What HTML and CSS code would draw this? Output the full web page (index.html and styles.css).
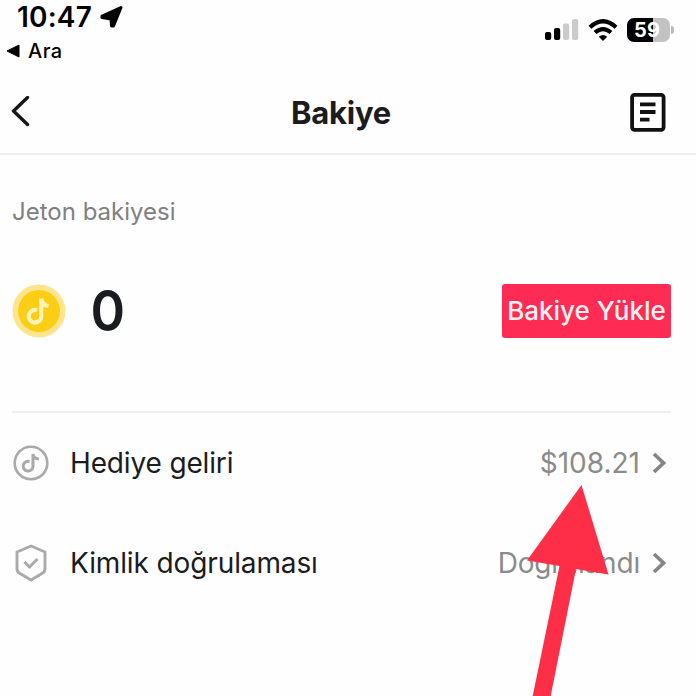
FILE: index.html
```html
<!DOCTYPE html>
<html lang="tr">
<head>
<meta charset="utf-8">
<title>Bakiye</title>
<link rel="stylesheet" href="styles.css">
</head>
<body>
<main class="screen">
  <div class="status">
    <div class="status-left">
      <div class="clock"><span class="time">10:47</span>
        <svg width="24" height="24" viewBox="0 0 24 24"><path d="M21 2.500 13.500 21 11.500 21 11 14 2 12.500 2 11Z" stroke="#000" stroke-width="3" stroke-linejoin="round"/></svg>
      </div>
      <div class="return">
        <svg width="14" height="14" viewBox="0 0 14 14"><path d="M1 7 13 1V13Z" stroke="#000" stroke-linejoin="round"/></svg>
        <span class="return-label">Ara</span>
      </div>
    </div>
    <div class="status-right">
      <svg width="34" height="22" viewBox="0 0 34 22"><rect x="0" y="13" width="6.2" height="8" rx="2"/><rect x="9" y="9" width="6.2" height="12" rx="2"/><g fill="#cbcbcb"><rect x="18" y="4.500" width="6.200" height="16.500" rx="2"/><rect x="27" y="0" width="6.200" height="21" rx="2"/></g></svg>
      <svg class="wifi" width="30" height="23" viewBox="0 0 30 23"><g fill="none" stroke="#000" stroke-width="4.200"><path d="M2 8.200Q15-3.800 28 8.200"/><path d="M7 13.500Q15 6.700 23 13.500"/></g><path d="M10.800 17.800Q15 14 19.200 17.800L15 22Z"/></svg>
      <div class="battery"><span class="charge">59</span></div>
      <div class="battery-tip"></div>
    </div>
  </div>
  <header class="header">
    <svg width="20" height="32" viewBox="0 0 20 32"><path d="M16.500 1.500 2.500 15 16.500 28.500" fill="none" stroke="#161616" stroke-width="3.400" stroke-linecap="round" stroke-linejoin="round"/></svg>
    <h1 class="title">Bakiye</h1>
    <svg width="36" height="40" viewBox="0 0 36 40"><g fill="none" stroke="#111" stroke-width="3.800"><rect x="2.100" y="2.800" width="31.500" height="35" rx="2.500"/><path d="M10 12.300H25.500M10 20H25.500M10 27.700H19.500"/></g></svg>
  </header>
  <section class="balance">
    <h2 class="caption">Jeton bakiyesi</h2>
    <div class="coins">
      <svg width="54" height="54" viewBox="0 0 54 54"><circle cx="27" cy="27" r="26.500" fill="#fee58d"/><circle cx="27" cy="27" r="21" fill="#face15"/><path d="M25 26.300A6.300 6.300 0 1 0 29.300 32.200V14.500C29.700 18.500 32 21.500 36.500 22" fill="none" stroke="#fff3b8" stroke-width="4.200"/></svg>
      <span class="amount">0</span>
      <button class="topup"><span class="topup-label">Bakiye Yükle</span></button>
    </div>
  </section>
  <nav class="rows">
    <a class="row">
      <svg class="icon" width="36" height="36" viewBox="0 0 36 36"><g fill="none" stroke="#aaa"><circle cx="18" cy="18" r="16.300" stroke-width="2.600"/><path d="M16.500 16.500A4.900 4.900 0 1 0 20 21V9C20.300 12 22.200 13.800 26 14.100" stroke-width="3"/></g></svg>
      <span class="label gift">Hediye geliri</span><span class="value money">$108.21</span>
      <svg width="14" height="22" viewBox="0 0 14 22"><path d="M2 2 11.500 11 2 20" fill="none" stroke="#858585" stroke-width="3.700"/></svg>
    </a>
    <a class="row">
      <svg class="icon" width="36" height="38" viewBox="0 0 36 38"><g fill="none" stroke="#aaa" stroke-linejoin="round"><path d="M18 2 32 8V25Q32 28 29 29.500L18 36 7 29.500Q4 28 4 25V8Z" stroke-width="2.900"/><path d="M11.500 18 16.500 23 24.500 15" stroke-width="3.100"/></g></svg>
      <span class="label identity">Kimlik doğrulaması</span><span class="value verified">Doğrulandı</span>
      <svg width="14" height="22" viewBox="0 0 14 22"><path d="M2 2 11.500 11 2 20" fill="none" stroke="#858585" stroke-width="3.700"/></svg>
    </a>
  </nav>
  <svg class="pointer" width="84" height="212" viewBox="0 0 84 212"><path d="M54.500 0 81.500 89.500 49 84 23.500 212H5.500L32.500 81 0 75.500Z" fill="#fe2e46"/></svg>
</main>
</body>
</html>
```
FILE: styles.css
```css
* { box-sizing: border-box; }
body { margin: 0; background: #fefefe; font-family: Inter, "Liberation Sans", sans-serif; color: #1b1c20; }
svg { display: block; flex: none; }
span { white-space: nowrap; }
.screen { position: relative; width: 696px; height: 696px; overflow: hidden; }
.status { display: flex; justify-content: space-between; height: 70px; color: #000; }
.clock { display: flex; align-items: center; height: 33px; padding-left: 17px; gap: 8px; }
.time { font-size: 28px; font-weight: 600; line-height: 34px; letter-spacing: .2px; }
.return { display: flex; align-items: center; height: 36px; padding-left: 6px; gap: 8px; }
.return-label { font-size: 20px; font-weight: 450; letter-spacing: .5px; }
.status-right { display: flex; align-items: center; height: 60px; padding-right: 22px; }
.wifi { margin: 0 9px 0 9px; }
.battery { display: flex; align-items: center; justify-content: center; width: 43px; height: 24px; border-radius: 7px; background: linear-gradient(90deg, #000 60%, #c2c2c2 60%); }
.charge { margin-right: 3px; color: #fff; font-size: 20px; font-weight: 700; letter-spacing: 0; }
.battery-tip { width: 3px; height: 8px; margin-left: 1px; border-radius: 0 4px 4px 0; background: #bbb; }
.header { display: flex; align-items: center; justify-content: space-between; height: 85px; padding: 0 30px 0 11px; border-bottom: 2px solid #efefef; }
.title { margin: 2px 0 0 21px; font-size: 31px; line-height: 40px; font-weight: 700; letter-spacing: -.25px; }
.balance { height: 258px; margin: 0 25px 0 12px; padding-top: 41px; border-bottom: 2px solid #efefef; }
.caption { margin: 0; font-size: 24px; line-height: 32px; font-weight: 400; color: #808080; letter-spacing: 0; }
.coins { display: flex; align-items: center; height: 54px; margin-top: 56px; }
.amount { margin-left: 23px; font-size: 57px; line-height: 60px; font-weight: 600; transform: scaleX(.92); }
.topup { width: 169px; height: 54px; margin-left: auto; padding: 0; border: 0; border-radius: 3px; background: #fe2c55; color: #fff0f2; font-family: inherit; }
.topup-label { display: block; margin-top: -2px; font-size: 26px; font-weight: 500; }
.row { display: flex; align-items: center; height: 100px; padding: 0 30px 0 13px; }
.icon { margin-right: 21px; }
.label { font-size: 28px; }
.gift { letter-spacing: -.15px; }
.identity { letter-spacing: -.12px; }
.value { margin-left: auto; margin-right: 12px; font-size: 28px; color: #8b8b8b; }
.verified { letter-spacing: -.2px; }
.pointer { position: absolute; left: 527px; top: 485px; }
```
